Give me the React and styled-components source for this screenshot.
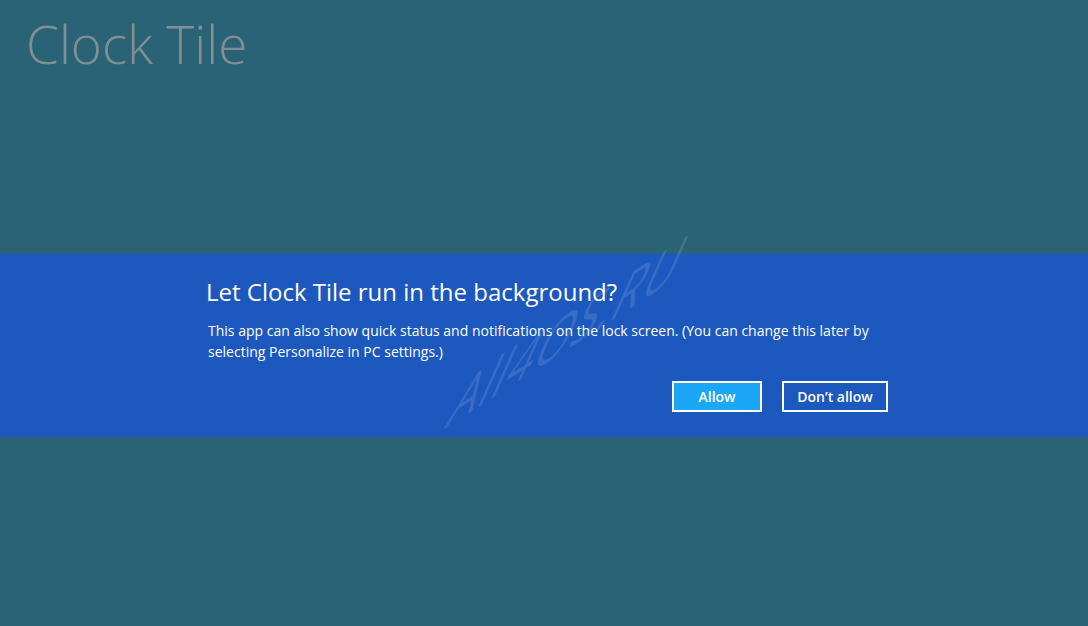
import styled, { createGlobalStyle } from 'styled-components';

const GlobalStyle = createGlobalStyle`
  html, body {
    margin: 0;
    padding: 0;
    background: #2a6376;
  }
  body {
    font-family: "Open Sans", "Noto Sans", sans-serif;
  }
`;

const Screen = styled.div`
  position: relative;
  width: 1088px;
  height: 626px;
  overflow: hidden;
  background: #2a6376;
  display: flex;
  flex-direction: column;
`;

const AppTitle = styled.h1`
  margin: 0;
  height: 254px;
  padding: 9px 0 0 26px;
  box-sizing: border-box;
  font-family: "Open Sans", sans-serif;
  font-weight: 300;
  font-size: 53px;
  line-height: 70px;
  color: #7f8f94;
`;

const Banner = styled.section`
  height: 183px;
  background: #1c58bd;
  display: flex;
  padding-left: 206px;
`;

const Content = styled.div`
  width: 682px;
  padding-top: 20px;
  color: #ffffff;
`;

const Heading = styled.h2`
  margin: 0;
  font-family: "Open Sans", sans-serif;
  font-weight: 400;
  font-size: 24px;
  line-height: 36px;
`;

const Message = styled.p`
  margin: 10px 0 0 2px;
  font-family: "Open Sans", sans-serif;
  font-size: 14px;
  line-height: 21px;
`;

const Actions = styled.div`
  display: flex;
  justify-content: flex-end;
  gap: 20px;
  margin-top: 19px;
`;

const Button = styled.button`
  box-sizing: border-box;
  height: 31px;
  width: ${p => p.$width}px;
  border: 2px solid #ffffff;
  background: ${p => (p.$primary ? '#1ba7f5' : 'transparent')};
  color: #ffffff;
  font-family: "Open Sans", sans-serif;
  font-weight: 600;
  font-size: 14px;
  padding: 0;
`;

// site watermark, slanted across the banner
const Watermark = styled.div`
  position: absolute;
  left: 443px;
  top: 379px;
  transform-origin: 0 51px;
  transform: matrix(0.797, -0.518, -0.54, 1.2, 0, 0);
  font-family: "Open Sans", sans-serif;
  font-weight: 400;
  font-size: 58px;
  line-height: 1;
  letter-spacing: 2px;
  color: rgba(255, 255, 255, 0.13);
  white-space: nowrap;
  pointer-events: none;
`;

export default function App() {
  return (
    <>
      <GlobalStyle />
      <Screen>
        <AppTitle>Clock Tile</AppTitle>
        <Banner>
          <Content>
            <Heading>Let Clock Tile run in the background?</Heading>
            <Message>
              This app can also show quick status and notifications on the lock screen. (You can change this later by
              <br />
              selecting Personalize in PC settings.)
            </Message>
            <Actions>
              <Button $primary $width={90}>Allow</Button>
              <Button $width={106}>Don’t allow</Button>
            </Actions>
          </Content>
        </Banner>
        <Watermark>All4OS.RU</Watermark>
      </Screen>
    </>
  );
}
